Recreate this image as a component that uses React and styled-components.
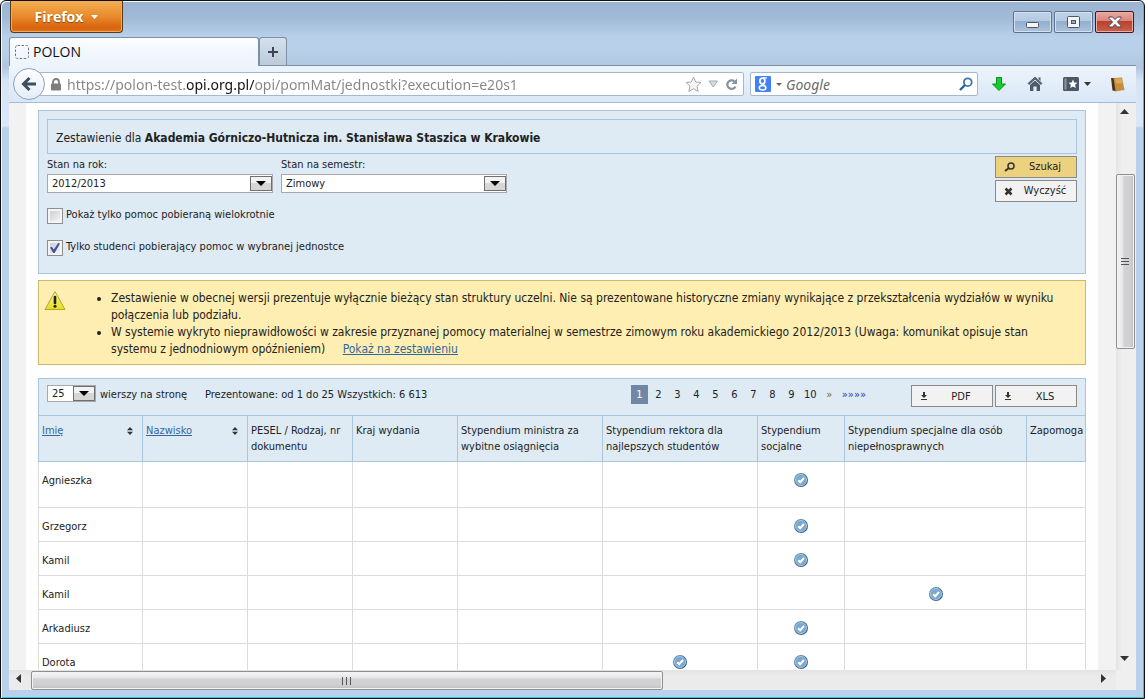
import React from 'react';
import styled, { createGlobalStyle } from 'styled-components';

const GlobalStyle = createGlobalStyle`
  * {
    box-sizing: border-box;
  }

  body {
    margin: 0;
    font-family: 'DejaVu Sans Condensed', 'DejaVu Sans', Tahoma, sans-serif;
    font-size: 11px;
    line-height: 16px;
    color: #222;
  }

  button, input, select {
    font: inherit;
    color: inherit;
    margin: 0;
  }
`;

const Window = styled.div`
  display: flex;
  flex-direction: column;
  height: 100vh;
  padding: 0 8px 8px;
  border: 1px solid #111;
  border-radius: 6px 6px 0 0;
  background: linear-gradient(#9ab4d2 0, #9fb9d6 16px, #b9d0e9 36px, #b9d0ea 50px, #b1c7df 66px, #d6e4f5 80px, #dae7f6 125px, #b9d1ea 127px);
  box-shadow: inset 1px 1px 0 #f2f7fc, inset -1px -1px 0 #35c4e0;
  overflow: hidden;
`;

const TitleBar = styled.header`
  display: flex;
  justify-content: space-between;
  height: 36px;
  padding: 0 2px 0 1px;
`;

const FirefoxButton = styled.button`
  display: flex;
  align-items: center;
  justify-content: center;
  gap: 8px;
  width: 113px;
  height: 32px;
  padding: 0;
  border: 1px solid #5b3a1c;
  border-top: 0;
  border-radius: 0 0 4px 4px;
  background: linear-gradient(#f3b052, #e88a2c 50%, #d9650f 85%, #de7119);
  box-shadow: inset 0 0 0 1px #f3a95a;
  color: #fff;
  font-family: 'Open Sans', sans-serif;
  font-size: 14px;
  font-weight: 700;
  text-shadow: 0 1px 1px #8a4a10;
`;

const WindowControls = styled.div`
  display: flex;
  gap: 2px;
  padding-top: 10px;
`;

const ControlButton = styled.button`
  display: flex;
  align-items: center;
  justify-content: center;
  width: 39px;
  height: 22px;
  padding: ${({ $low }) => ($low ? '5px 0 0' : '0')};
  border: 1px solid ${({ $close }) => ($close ? '#4a1420' : '#5c7391')};
  border-radius: 2px;
  background: ${({ $close }) =>
    $close
      ? 'linear-gradient(#e9a99f 0, #d9867a 45%, #b8412c 46%, #c9604c 100%)'
      : 'linear-gradient(#c0d3e8 0, #b3c9e0 45%, #93adca 46%, #adc4de 100%)'};
  box-shadow: inset 0 0 0 1px ${({ $close }) => ($close ? '#e6b0a8' : '#d3e1f0')};
`;

const TabBar = styled.nav`
  display: flex;
  height: 29px;
  border-bottom: 1px solid #7d8fa8;
`;

const Tab = styled.a`
  display: flex;
  align-items: center;
  gap: 4px;
  width: 250px;
  height: 29px;
  padding: 0 5px;
  border: 1px solid #7d8fa8;
  border-bottom: 0;
  border-radius: 3px 3px 0 0;
  background: linear-gradient(#fdfeff, #f2f7fd 50%, #edf4fc);
  color: #111;
  font-family: 'Open Sans', sans-serif;
  font-size: 14px;
  text-decoration: none;
`;

const NewTab = styled.button`
  display: flex;
  align-items: center;
  justify-content: center;
  width: 28px;
  padding: 0;
  border: 1px solid #7d8fa8;
  border-bottom: 0;
  border-radius: 3px 3px 0 0;
  background: linear-gradient(#d4e0ec, #bccad9);
`;

const NavBar = styled.div`
  display: flex;
  align-items: center;
  height: 37px;
  padding: 0 11px 0 4px;
  border-bottom: 1px solid #a0bcd9;
  background: linear-gradient(#edf4fc, #dae7f6);
`;

const BackButton = styled.button`
  display: flex;
  align-items: center;
  justify-content: center;
  width: 32px;
  height: 32px;
  padding: 0;
  border: 1px solid #8ea1b8;
  border-radius: 50%;
  background: linear-gradient(#fdfeff, #e4edf7);
  z-index: 1;
`;

const Field = styled.div`
  display: flex;
  align-items: center;
  height: 24px;
  border: 1px solid #a5b8cc;
  border-radius: 2px;
  background: #fff;
`;

const UrlField = styled(Field)`
  flex: 1;
  gap: 6px;
  margin-left: -6px;
  padding: 0 5px 0 11px;
`;

const SearchField = styled(Field)`
  width: 228px;
  margin: 0 13px 0 6px;
  padding: 0 4px;
  gap: 4px;
`;

const TextInput = styled.input`
  flex: 1;
  min-width: 0;
  height: 22px;
  padding: 0;
  border: 0;
  outline: 0;
  background: transparent;
  color: #666;
  font-family: 'Noto Sans', 'Open Sans', sans-serif;
  font-size: 14px;
`;

/* the host name is darker than the rest of the address */
const UrlInput = styled(TextInput)`
  color: transparent;
  background: linear-gradient(90deg, #858585 0 120px, #111 120px 187px, #858585 187px);
  background-clip: text;
`;

const SearchInput = styled(TextInput)`
  &::placeholder {
    color: #6c6c6c;
    font-style: italic;
  }
`;

const IconButton = styled.button`
  display: flex;
  align-items: center;
  justify-content: center;
  gap: 5px;
  padding: 0;
  border: 0;
  background: none;
`;

const ToolIcons = styled.div`
  display: flex;
  align-items: center;
  gap: 20px;
`;

const Viewport = styled.div`
  flex: 1;
  min-height: 0;
  display: grid;
  grid-template-columns: 1fr 20px;
  grid-template-rows: 1fr 20px;
  background: #efefef;
`;

const Page = styled.div`
  min-height: 0;
  overflow: hidden;
  padding: 0 18px 0 17px;
  background: #f2f2f2;
`;

const Content = styled.main`
  min-height: 100%;
  padding: 7px 12px;
  background: #fefefe;
`;

const VScroll = styled.div`
  display: grid;
  grid-template-rows: 20px 51fr 175fr 300fr 20px;
  background: linear-gradient(90deg, #e3e3e3, #efefef 30%);
`;

const HScroll = styled.div`
  display: grid;
  grid-template-columns: 22px 632fr 431fr 22px;
  background: linear-gradient(#e3e3e3, #ebebeb 30%);
`;

const ScrollButton = styled.button`
  display: flex;
  align-items: center;
  justify-content: center;
  padding: 0 3px 3px 0;
  border: 0;
  background: none;
`;

const Thumb = styled.div`
  display: flex;
  align-items: center;
  justify-content: center;
  margin: ${({ $vertical }) => ($vertical ? '0 1px 0 0' : '1px 0 0')};
  border: 1px solid #8f8f8f;
  border-radius: 2px;
  background: linear-gradient(${({ $vertical }) => ($vertical ? '90deg' : '180deg')}, #f5f5f5, #e6e6e6 35%, #d3d3d5 40%, #d0d0d2 75%, #bfbfc1);
  box-shadow: inset 0 0 0 1px #f3f3f3;
`;

const Panel = styled.section`
  border: 1px solid #a9c6df;
  background: #deeaf4;
`;

const FilterPanel = styled(Panel)`
  padding: 8px 8px 16px;
`;

const PanelTitle = styled.h1`
  margin: 0 0 2px;
  padding: 10px 8px 7px;
  border: 1px solid #a9c6df;
  font-size: 12px;
  line-height: 16px;
  font-weight: 400;
`;

const FilterBody = styled.div`
  display: flex;
  justify-content: space-between;
`;

const Filters = styled.div`
  display: flex;
  flex-direction: column;
  gap: 14px;
`;

const SelectRow = styled.div`
  display: flex;
  gap: 8px;
`;

const SelectField = styled.div`
  display: flex;
  flex-direction: column;
  width: 226px;

  label {
    line-height: 18px;
  }
`;

const SelectWrap = styled.span`
  display: grid;
  align-items: center;
  width: ${({ $small }) => ($small ? '49px' : '100%')};
`;

const StyledSelect = styled.select`
  grid-area: 1 / 1;
  width: 100%;
  height: ${({ $small }) => ($small ? '17px' : '19px')};
  padding: 0 4px;
  appearance: none;
  border: 1px solid #a8a8a8;
  border-radius: 0;
  background: #fff;
  line-height: 15px;
`;

const Arrow = styled.span`
  grid-area: 1 / 1;
  justify-self: end;
  display: flex;
  align-items: center;
  justify-content: center;
  width: 22px;
  height: 15px;
  margin-right: 1px;
  border: 1px solid #6f6f6f;
  background: linear-gradient(#f2f2f2 50%, #d6d6d6 50%);
  pointer-events: none;
`;

const CheckRow = styled.div`
  display: flex;
  align-items: flex-start;
  gap: 3px;
  height: 18px;
`;

const Checkbox = styled.input`
  display: grid;
  place-items: center;
  width: 16px;
  height: 16px;
  margin-top: 1px;
  appearance: none;
  border: 1px solid #8e8f8f;
  background: linear-gradient(135deg, #c3c8cf, #f6f6f6 90%);
  box-shadow: inset 0 0 0 2px #f4f4f4;

  &:checked::after {
    content: '';
    width: 10px;
    height: 10px;
    background: #43549c;
    clip-path: polygon(0 45%, 18% 38%, 38% 66%, 82% 0, 100% 6%, 46% 100%, 32% 100%);
  }
`;

const Buttons = styled.div`
  display: flex;
  flex-direction: ${({ $row }) => ($row ? 'row' : 'column')};
  gap: 2px;
`;

const ActionButton = styled.button`
  display: grid;
  grid-template-columns: 10px 1fr;
  align-items: center;
  width: 82px;
  height: 22px;
  padding: 0 7px 0 8px;
  border: 1px solid #8a8a8a;
  background: ${({ $primary }) => ($primary ? '#ecd27f' : '#f2f2f2')};
  text-align: center;

  span {
    padding-left: 7px;
  }
`;

const Notice = styled.section`
  display: flex;
  gap: 28px;
  margin: 6px 0 13px;
  padding: 9px 16px 6px 5px;
  border: 1px solid #cdb76f;
  background: #feeeb1;
  font-size: 12px;
  line-height: 17px;

  svg {
    flex: none;
  }

  ul {
    margin: 0;
    padding-left: 17px;
  }

  a {
    margin-left: 14px;
  }
`;

const Link = styled.a`
  color: #33669f;
  text-decoration: underline;
`;

const Toolbar = styled.div`
  display: flex;
  align-items: flex-start;
  height: 36px;
  padding: 6px 8px;
  line-height: 19px;
`;

const PageSize = styled.div`
  display: flex;
  align-items: flex-start;
  gap: 4px;
  width: 158px;
  white-space: nowrap;
`;

const Pager = styled.nav`
  display: flex;
  margin: 0 41px 0 auto;
`;

const PageLink = styled.a`
  min-width: 17px;
  height: 19px;
  margin-right: 2px;
  padding: 0 2px;
  background: ${({ $current }) => ($current ? '#7088a6' : 'transparent')};
  color: ${({ $current, $arrow }) => ($current ? '#fff' : $arrow || '#222')};
  text-align: center;
  text-decoration: none;
`;

const Table = styled.table`
  width: calc(100% + 2px);
  margin: 0 -1px;
  table-layout: fixed;
  border-collapse: collapse;
`;

const HeadCell = styled.th`
  height: 46px;
  padding: 7px 0 5px 3px;
  border: 1px solid #a9c6df;
  background: #deeaf4;
  font-weight: 400;
  text-align: left;
  vertical-align: top;
`;

const SortHead = styled.div`
  display: flex;
  align-items: center;
  justify-content: space-between;
  padding-right: 9px;
`;

const Cell = styled.td`
  height: ${({ $tall }) => ($tall ? '46px' : '34px')};
  padding: 11px 3px 0;
  border: 1px solid #dcdcdc;
  background: #fff;
  text-align: ${({ $mark }) => ($mark ? 'center' : 'left')};
  vertical-align: top;

  svg {
    display: inline-block;
    vertical-align: top;
  }
`;

const columns = [
  { title: 'Imię', width: 104, sortable: true },
  { title: 'Nazwisko', width: 105, sortable: true },
  { title: 'PESEL / Rodzaj, nr dokumentu', width: 105 },
  { title: 'Kraj wydania', width: 105 },
  { title: 'Stypendium ministra za wybitne osiągnięcia', width: 145 },
  { title: 'Stypendium rektora dla najlepszych studentów', width: 155 },
  { title: 'Stypendium socjalne', width: 87 },
  { title: 'Stypendium specjalne dla osób niepełnosprawnych', width: 182 },
  { title: 'Zapomoga', width: 59 },
];

const students = [
  { name: 'Agnieszka', marks: [6], tall: true },
  { name: 'Grzegorz', marks: [6] },
  { name: 'Kamil', marks: [6] },
  { name: 'Kamil', marks: [7] },
  { name: 'Arkadiusz', marks: [6] },
  { name: 'Dorota', marks: [5, 6] },
];

const Triangle = ({ w = 8, h = 4, dir = 'down', color = '#111' }) => {
  const points = {
    down: `0,0 ${w},0 ${w / 2},${h}`,
    up: `0,${h} ${w},${h} ${w / 2},0`,
    left: `${w},0 ${w},${h} 0,${h / 2}`,
    right: `0,0 0,${h} ${w},${h / 2}`,
  };
  return (
    <svg width={w} height={h} aria-hidden="true">
      <polygon points={points[dir]} fill={color} />
    </svg>
  );
};

const CheckMark = () => (
  <svg width="14" height="14" viewBox="0 0 14 14" role="img" aria-label="Tak">
    <defs>
      <linearGradient id="mark" x1="0" y1="0" x2="1" y2="1">
        <stop offset="0" stopColor="#6f9fc6" />
        <stop offset="1" stopColor="#24507c" />
      </linearGradient>
    </defs>
    <circle cx="7" cy="7" r="7" fill="url(#mark)" />
    <circle cx="7" cy="7" r="5.5" fill="#7ba6cd" stroke="#a9c8e0" strokeWidth="1" />
    <path d="M4.2 7.2l2 2 3.8-4.2" fill="none" stroke="#fff" strokeWidth="2" />
  </svg>
);

const Grip = ({ vertical }) => (
  <svg width="10" height="10" aria-hidden="true">
    <path
      d={vertical ? 'M0 1.5h8M0 4.5h8M0 7.5h8' : 'M.5 1v8M4.500 1v8M8.500 1v8'}
      stroke="#555"
      strokeWidth="1"
    />
  </svg>
);

const DownloadIcon = () => (
  <svg width="8" height="9" viewBox="0 0 8 9" aria-hidden="true">
    <path d="M3 0h2v3h2L4 6 1 3h2zM1 7h6v1H1z" fill="#333" />
  </svg>
);

const SelectBox = ({ id, small, label, value }) => (
  <SelectWrap $small={small}>
    <StyledSelect id={id} $small={small} aria-label={label} defaultValue={value}>
      <option>{value}</option>
    </StyledSelect>
    <Arrow>
      <Triangle w={10} h={5} color="#000" />
    </Arrow>
  </SelectWrap>
);

const BrowserChrome = () => (
  <>
    <TitleBar>
      <FirefoxButton>
        Firefox <Triangle w={7} h={4} color="#fff" />
      </FirefoxButton>
      <WindowControls>
        <ControlButton $low aria-label="Minimalizuj">
          <svg width="13" height="6">
            <rect x=".5" y=".5" width="12" height="5" rx="1" fill="#f5f5f5" stroke="#4d5666" />
          </svg>
        </ControlButton>
        <ControlButton aria-label="Maksymalizuj">
          <svg width="13" height="12">
            <rect x=".5" y=".5" width="12" height="11" rx="1" fill="#f5f5f5" stroke="#4d5666" />
            <rect x="4.5" y="4.5" width="4" height="3" fill="#8fa9c6" stroke="#4d5666" />
          </svg>
        </ControlButton>
        <ControlButton $close aria-label="Zamknij">
          <svg width="14" height="12" viewBox="0 0 14 12">
            <path
              d="M1 1h3.6L7 3.6 9.4 1H13v1.4L9.4 6l3.6 3.6V11H9.4L7 8.4 4.6 11H1V9.6L4.6 6 1 2.4z"
              fill="#f7f7f7"
              stroke="#4d4450"
            />
          </svg>
        </ControlButton>
      </WindowControls>
    </TitleBar>
    <TabBar>
      <Tab href="#polon">
        <svg width="14" height="14">
          <rect x=".5" y=".5" width="13" height="13" rx="2" fill="none" stroke="#777" strokeDasharray="2.5 1.5" />
        </svg>
        POLON
      </Tab>
      <NewTab aria-label="Nowa karta">
        <svg width="10" height="10">
          <path d="M5 0v10M0 5h10" stroke="#3a4654" strokeWidth="2" />
        </svg>
      </NewTab>
    </TabBar>
    <NavBar>
      <BackButton aria-label="Wstecz">
        <svg width="16" height="16" viewBox="0 0 16 16">
          <path d="M15 8H3M8.5 2L2.5 8l6 6" fill="none" stroke="#3f4c5c" strokeWidth="3" />
        </svg>
      </BackButton>
      <UrlField>
        <svg width="10" height="13" viewBox="0 0 10 13">
          <path d="M2 6V4a3 3 0 0 1 6 0v2" fill="none" stroke="#7d7d7d" strokeWidth="1.8" />
          <rect y="5.5" width="10" height="7" rx="1" fill="#7d7d7d" />
        </svg>
        <UrlInput
          aria-label="Adres"
          defaultValue="https://polon-test.opi.org.pl/opi/pomMat/jednostki?execution=e20s1"
        />
        <IconButton aria-label="Dodaj zakładkę">
          <svg width="17" height="17" viewBox="0 0 17 17">
            <path
              d="M8.5 1l2.2 5 5.3.5-4 3.6 1.2 5.4-4.7-2.8-4.7 2.8L5 10.1 1 6.5l5.3-.5z"
              fill="#f6f6f6"
              stroke="#a8a8a8"
            />
          </svg>
        </IconButton>
        <IconButton aria-label="Historia">
          <svg width="11" height="9">
            <path d="M1 1h8.5L5.2 7z" fill="#d5dce3" stroke="#a3adb8" />
          </svg>
        </IconButton>
        <IconButton aria-label="Odśwież">
          <svg width="13" height="13" viewBox="0 0 13 13">
            <path d="M9.3 3.2A4.3 4.3 0 1 0 10.5 8.5" fill="none" stroke="#8593a1" strokeWidth="2.2" />
            <path d="M12 .5v5.5H6.5z" fill="#8593a1" />
          </svg>
        </IconButton>
      </UrlField>
      <SearchField>
        <IconButton aria-label="Wyszukiwarka">
          <svg width="16" height="16" viewBox="0 0 16 16">
            <rect width="16" height="16" rx="1" fill="#4380f5" />
            <ellipse cx="7.4" cy="5" rx="2.5" ry="2.9" fill="none" stroke="#fff" strokeWidth="1.7" />
            <ellipse cx="7.6" cy="11.8" rx="3.3" ry="2.3" fill="none" stroke="#fff" strokeWidth="1.5" />
            <path d="M8 1.8h4M8 7.8l2 2" stroke="#fff" strokeWidth="1.2" />
          </svg>
          <Triangle w={6} h={3} color="#666" />
        </IconButton>
        <SearchInput aria-label="Szukaj" placeholder="Google" />
        <IconButton aria-label="Szukaj">
          <svg width="14" height="14" viewBox="0 0 14 14">
            <circle cx="8.8" cy="5.2" r="3.9" fill="none" stroke="#3a76b0" strokeWidth="1.8" />
            <path d="M6 8l-5 5" stroke="#2a5f98" strokeWidth="2.4" />
          </svg>
        </IconButton>
      </SearchField>
      <ToolIcons>
        <IconButton aria-label="Pobieranie">
          <svg width="16" height="16" viewBox="0 0 16 16">
            <path d="M5.5 1.5h5V8h4L8 14.5 1.5 8h4z" fill="#12cf2c" stroke="#0a8f1c" />
          </svg>
        </IconButton>
        <IconButton aria-label="Strona domowa">
          <svg width="16" height="16" viewBox="0 0 16 16">
            <path d="M8 1l7 6.5-1 1L8 3 2 8.5l-1-1z" fill="#5d6878" stroke="#434d5b" strokeWidth=".8" />
            <path d="M11.5 1.5h2V5l-2-2zM8 4.5l5 4.6V15H9.6v-4.5H6.4V15H3V9.1z" fill="#4e5969" />
          </svg>
        </IconButton>
        <IconButton aria-label="Zakładki">
          <svg width="16" height="14" viewBox="0 0 16 14">
            <rect width="16" height="14" rx="1.5" fill="#4c5766" />
            <path d="M1.5 1.5h2v11h-2z" fill="#8c97a5" />
            <path d="M10 2.5l1.3 2.9 3.2.3-2.4 2.1.7 3.2L10 9.4 7.2 11l.7-3.2-2.4-2.1 3.2-.3z" fill="#fff" />
          </svg>
          <Triangle w={7} h={4} color="#333" />
        </IconButton>
        <IconButton aria-label="Słownik">
          <svg width="14" height="15" viewBox="0 0 14 15">
            <path d="M1 1l10-.5L13.5 13 4 14.5z" fill="#c68d3b" />
            <path d="M0 1h2.5l2 13-3-.5z" fill="#49321c" />
            <path d="M4 1.5h6.5l1 5H5z" fill="#dba95a" />
          </svg>
        </IconButton>
      </ToolIcons>
    </NavBar>
  </>
);

const FilterForm = () => (
  <FilterPanel>
    <PanelTitle>
      Zestawienie dla <b>Akademia Górniczo-Hutnicza im. Stanisława Staszica w Krakowie</b>
    </PanelTitle>
    <FilterBody>
      <Filters>
        <SelectRow>
          <SelectField>
            <label htmlFor="rok">Stan na rok:</label>
            <SelectBox id="rok" value="2012/2013" />
          </SelectField>
          <SelectField>
            <label htmlFor="semestr">Stan na semestr:</label>
            <SelectBox id="semestr" value="Zimowy" />
          </SelectField>
        </SelectRow>
        <CheckRow>
          <Checkbox type="checkbox" id="wielokrotnie" />
          <label htmlFor="wielokrotnie">Pokaż tylko pomoc pobieraną wielokrotnie</label>
        </CheckRow>
        <CheckRow>
          <Checkbox type="checkbox" id="jednostka" defaultChecked />
          <label htmlFor="jednostka">Tylko studenci pobierający pomoc w wybranej jednostce</label>
        </CheckRow>
      </Filters>
      <Buttons>
        <ActionButton $primary>
          <svg width="11" height="10" viewBox="0 0 11 10">
            <circle cx="7" cy="4" r="3" fill="none" stroke="#333" strokeWidth="1.5" />
            <path d="M5 6L1 9" stroke="#333" strokeWidth="2" />
          </svg>
          <span>Szukaj</span>
        </ActionButton>
        <ActionButton>
          <svg width="9" height="9" viewBox="0 0 9 9">
            <path d="M1.5 1.5l6 6M7.5 1.5l-6 6" stroke="#333" strokeWidth="2.5" />
          </svg>
          <span>Wyczyść</span>
        </ActionButton>
      </Buttons>
    </FilterBody>
  </FilterPanel>
);

const Results = () => (
  <Panel>
    <Toolbar>
      <PageSize>
        <SelectBox small label="wierszy na stronę" value="25" />
        wierszy na stronę
      </PageSize>
      <span>Prezentowane: od 1 do 25 Wszystkich: 6 613</span>
      <Pager>
        {[1, 2, 3, 4, 5, 6, 7, 8, 9, 10].map((n) => (
          <PageLink key={n} href={`#${n}`} $current={n === 1}>
            {n}
          </PageLink>
        ))}
        <PageLink href="#next" $arrow="#7a6a10">»</PageLink>
        <PageLink href="#last" $arrow="#1d3fae">»»»»</PageLink>
      </Pager>
      <Buttons $row>
        <ActionButton><DownloadIcon /><span>PDF</span></ActionButton>
        <ActionButton><DownloadIcon /><span>XLS</span></ActionButton>
      </Buttons>
    </Toolbar>
    <Table>
      <colgroup>
        {columns.map((c) => (
          <col key={c.title} width={c.width} />
        ))}
      </colgroup>
      <thead>
        <tr>
          {columns.map((c) => (
            <HeadCell key={c.title}>
              {c.sortable ? (
                <SortHead>
                  <Link href="#sort">{c.title}</Link>
                  <svg width="6" height="8" viewBox="0 0 6 8">
                    <path d="M3 0l3 3.2H0zM0 4.8h6L3 8z" fill="#333" />
                  </svg>
                </SortHead>
              ) : (
                c.title
              )}
            </HeadCell>
          ))}
        </tr>
      </thead>
      <tbody>
        {students.map((s, row) => (
          <tr key={row}>
            {columns.map((c, i) => (
              <Cell key={c.title} $tall={s.tall} $mark={i > 0}>
                {i === 0 && s.name}
                {s.marks.includes(i) && <CheckMark />}
              </Cell>
            ))}
          </tr>
        ))}
      </tbody>
    </Table>
  </Panel>
);

const App = () => (
  <>
    <GlobalStyle />
    <Window>
      <BrowserChrome />
      <Viewport>
        <Page>
          <Content>
            <FilterForm />
            <Notice>
              <svg width="22" height="21" viewBox="0 0 22 21">
                <defs>
                  <linearGradient id="warn" x1="0" y1="0" x2="0" y2="1">
                    <stop offset="0" stopColor="#fbf6a0" />
                    <stop offset="1" stopColor="#e6dd1c" />
                  </linearGradient>
                </defs>
                <path
                  d="M11 1.5L21 19.5H1z"
                  fill="url(#warn)"
                  stroke="#b5a632"
                  strokeLinejoin="round"
                />
                <path d="M11 7v6" stroke="#222" strokeWidth="2.6" strokeLinecap="round" />
                <circle cx="11" cy="16.2" r="1.5" fill="#222" />
              </svg>
              <ul>
                <li>
                  Zestawienie w obecnej wersji prezentuje wyłącznie bieżący stan struktury uczelni. Nie są
                  prezentowane historyczne zmiany wynikające z przekształcenia wydziałów w wyniku połączenia lub
                  podziału.
                </li>
                <li>
                  W systemie wykryto nieprawidłowości w zakresie przyznanej pomocy materialnej w semestrze zimowym
                  roku akademickiego 2012/2013 (Uwaga: komunikat opisuje stan systemu z jednodniowym opóźnieniem){' '}
                  <Link href="#zestawienie">Pokaż na zestawieniu</Link>
                </li>
              </ul>
            </Notice>
            <Results />
          </Content>
        </Page>
        <VScroll>
          <ScrollButton aria-label="W górę"><Triangle w={9} h={5} dir="up" color="#333" /></ScrollButton>
          <span />
          <Thumb $vertical><Grip vertical /></Thumb>
          <span />
          <ScrollButton aria-label="W dół"><Triangle w={9} h={5} color="#333" /></ScrollButton>
        </VScroll>
        <HScroll>
          <ScrollButton aria-label="W lewo"><Triangle w={5} h={9} dir="left" color="#333" /></ScrollButton>
          <Thumb><Grip /></Thumb>
          <span />
          <ScrollButton aria-label="W prawo"><Triangle w={5} h={9} dir="right" color="#333" /></ScrollButton>
        </HScroll>
      </Viewport>
    </Window>
  </>
);

export default App;
